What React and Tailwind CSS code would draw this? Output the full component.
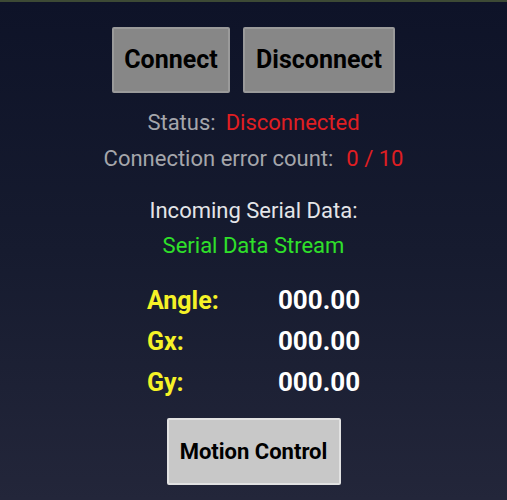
import React from 'react';

function GrayButton({ children, className = '' }) {
  return (
    <button
      className={`flex items-center justify-center rounded-[2px] border-2 font-bold text-black ${className}`}
    >
      {children}
    </button>
  );
}

function Reading({ label, value }) {
  return (
    <div className="flex h-[41px] items-center">
      <span className="w-[131px] text-[25px] font-bold text-[#f5f227]">{label}</span>
      <span className="text-[26px] font-bold text-white">{value}</span>
    </div>
  );
}

export default function App() {
  return (
    <div
      className="flex h-[500px] w-[507px] flex-col items-center border-t-2 border-[#3d4a35] bg-[linear-gradient(180deg,#0e1328_0%,#161b2f_50%,#23263a_100%)]"
      style={{ fontFamily: 'Roboto, "Noto Sans", sans-serif' }}
    >
      <div className="mt-[25px] flex gap-[13px]">
        <GrayButton className="h-[66px] w-[118px] border-[#9a9a9a] bg-[#878787] text-[25px]">Connect</GrayButton>
        <GrayButton className="h-[66px] w-[152px] border-[#9a9a9a] bg-[#878787] text-[25px]">Disconnect</GrayButton>
      </div>

      <div className="mt-[14px] flex h-[30px] items-center text-[22px] text-[#a5a6ab]">
        Status:<span className="ml-[10px] text-[#e01e22]">Disconnected</span>
      </div>
      <div className="mt-[6px] flex h-[30px] items-center text-[22px] text-[#a5a6ab]">
        Connection error count:<span className="ml-[13px] text-[#e01e22]">0 / 10</span>
      </div>

      <div className="mt-[22px] flex h-[30px] items-center text-[22px] text-[#e4e5e8]">
        Incoming Serial Data:
      </div>
      <div className="mt-[5px] flex h-[30px] items-center text-[22px] text-[#2fe02a]">
        Serial Data Stream
      </div>

      <div className="mt-[20px] flex flex-col">
        <Reading label="Angle:" value="000.00" />
        <Reading label="Gx:" value="000.00" />
        <Reading label="Gy:" value="000.00" />
      </div>

      <GrayButton className="mt-[15px] h-[67px] w-[174px] border-[#e2e2e2] bg-[#c8c8c8] text-[22px]">
        Motion Control
      </GrayButton>
    </div>
  );
}
